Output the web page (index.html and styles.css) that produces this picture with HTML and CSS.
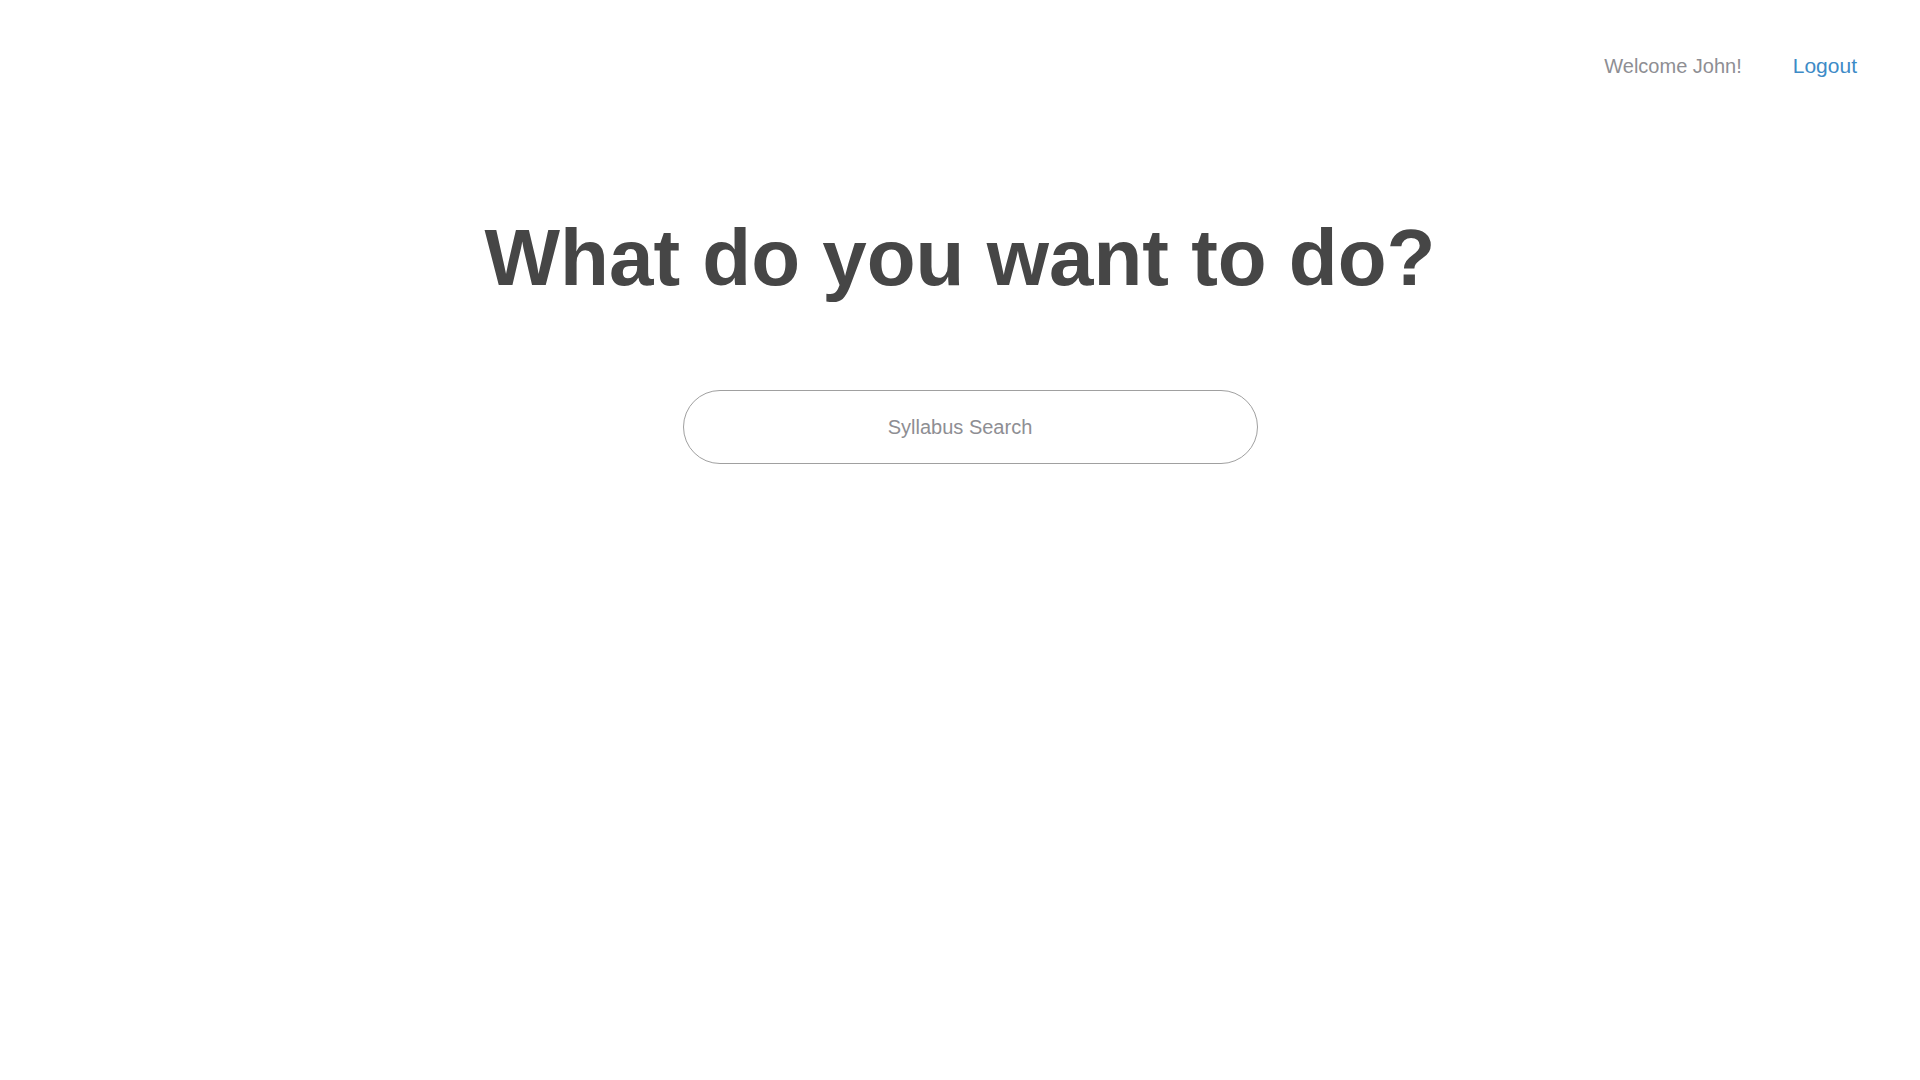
FILE: index.html
```html
<!DOCTYPE html>
<html lang="en">
<head>
<meta charset="utf-8">
<title>What do you want to do?</title>
<link rel="stylesheet" href="styles.css">
</head>
<body>
<header class="topbar">
  <span class="welcome">Welcome John!</span>
  <a class="logout" href="#">Logout</a>
</header>
<main class="main">
  <h1 class="title">What do you want to do?</h1>
  <input class="search" type="text" placeholder="Syllabus Search">
</main>
</body>
</html>
```
FILE: styles.css
```css
html, body {
  margin: 0;
  padding: 0;
  background: #ffffff;
  font-family: "Liberation Sans", Arial, sans-serif;
}
.topbar {
  display: flex;
  justify-content: flex-end;
  align-items: baseline;
  gap: 51px;
  height: 21px;
  padding: 55px 63px 0 0;
  font-size: 21px;
  line-height: 21px;
}
.welcome {
  color: #8e8e93;
  font-size: 20px;
}
.logout {
  color: #3d8bc7;
  text-decoration: none;
}
.main {
  display: flex;
  flex-direction: column;
  align-items: center;
}
.title {
  margin: 142px 0 0 0;
  font-size: 80px;
  line-height: 80px;
  font-weight: 700;
  color: #464646;
}
.search {
  box-sizing: border-box;
  margin: 92px 0 0 21px;
  width: 575px;
  height: 74px;
  border: 1px solid #a0a0a0;
  border-radius: 37px;
  padding: 0 21px 0 0;
  text-align: center;
  font-family: "Liberation Sans", Arial, sans-serif;
  font-size: 20px;
  color: #8e8e93;
  outline: none;
  background: #fff;
}
.search::placeholder {
  color: #8e8e93;
  opacity: 1;
}
```
